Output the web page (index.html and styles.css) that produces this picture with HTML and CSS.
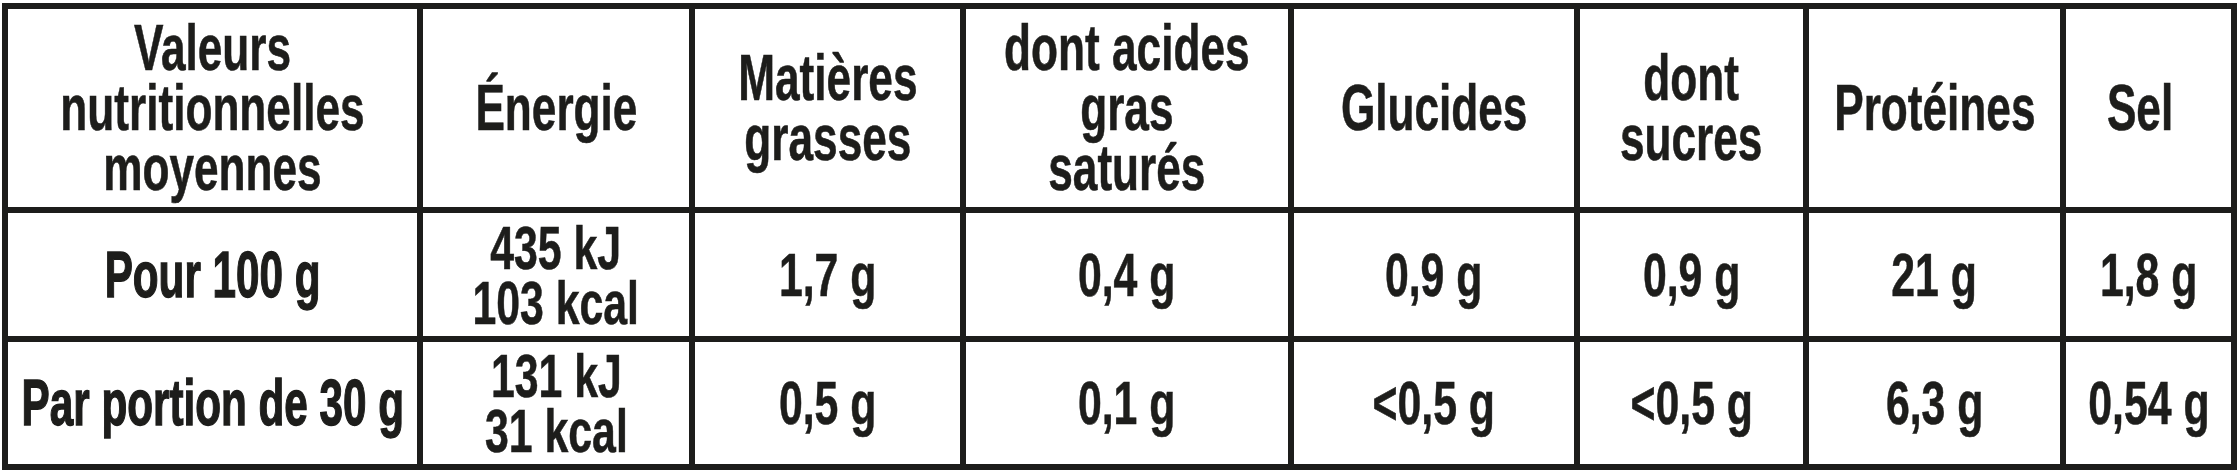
FILE: index.html
```html
<!DOCTYPE html>
<html lang="fr">
<head>
<meta charset="utf-8">
<title>Valeurs nutritionnelles</title>
<link rel="stylesheet" href="styles.css">
</head>
<body>
<div class="table">
  <div class="cell head"><span class="t">Valeurs<br>nutritionnelles<br>moyennes</span></div>
  <div class="cell head"><span class="t">Énergie</span></div>
  <div class="cell head"><span class="t">Matières<br>grasses</span></div>
  <div class="cell head"><span class="t">dont acides<br>gras<br>saturés</span></div>
  <div class="cell head"><span class="t">Glucides</span></div>
  <div class="cell head"><span class="t">dont<br>sucres</span></div>
  <div class="cell head"><span class="t">Protéines</span></div>
  <div class="cell head sel"><span class="t">Sel</span></div>

  <div class="cell label"><span class="t">Pour 100 g</span></div>
  <div class="cell val energy"><span class="t">435 kJ<br>103 kcal</span></div>
  <div class="cell val"><span class="t">1,7 g</span></div>
  <div class="cell val"><span class="t">0,4 g</span></div>
  <div class="cell val"><span class="t">0,9 g</span></div>
  <div class="cell val"><span class="t">0,9 g</span></div>
  <div class="cell val"><span class="t">21 g</span></div>
  <div class="cell val"><span class="t">1,8 g</span></div>

  <div class="cell label"><span class="t">Par portion de 30 g</span></div>
  <div class="cell val energy"><span class="t">131 kJ<br>31 kcal</span></div>
  <div class="cell val"><span class="t">0,5 g</span></div>
  <div class="cell val"><span class="t">0,1 g</span></div>
  <div class="cell val"><span class="t">&lt;0,5 g</span></div>
  <div class="cell val"><span class="t">&lt;0,5 g</span></div>
  <div class="cell val"><span class="t">6,3 g</span></div>
  <div class="cell val"><span class="t">0,54 g</span></div>
</div>
</body>
</html>
```
FILE: styles.css
```css
html, body {
  margin: 0;
  padding: 0;
  background: #ffffff;
}
body {
  padding: 3px 0 0 2px;
  font-family: "Liberation Sans", "Arial", sans-serif;
  color: #1d1d1b;
}
.table {
  display: grid;
  grid-template-columns: 409px 266px 265px 322px 280px 223px 251px 165px;
  grid-template-rows: 198px 123px 122px;
  gap: 6px;
  padding: 6px;
  background: #1d1d1b;
  width: max-content;
}
.cell {
  background: #ffffff;
  display: flex;
  align-items: center;
  justify-content: center;
  text-align: center;
  font-weight: 700;
  min-width: 0;
}
.t {
  display: inline-block;
  white-space: nowrap;
  transform: scaleX(0.69);
  transform-origin: center center;
}
.head {
  font-size: 64px;
  line-height: 60px;
}
.head .t {
  -webkit-text-stroke: 0.6px #1d1d1b;
}
.sel {
  padding-right: 16px;
}
.label {
  font-size: 64px;
  line-height: 64px;
}
.label .t {
  transform: scaleX(0.66);
  -webkit-text-stroke: 1.4px #1d1d1b;
}
.val {
  font-size: 62px;
  line-height: 62px;
}
.val .t {
  -webkit-text-stroke: 0.6px #1d1d1b;
}
.energy {
  line-height: 55px;
}
```
